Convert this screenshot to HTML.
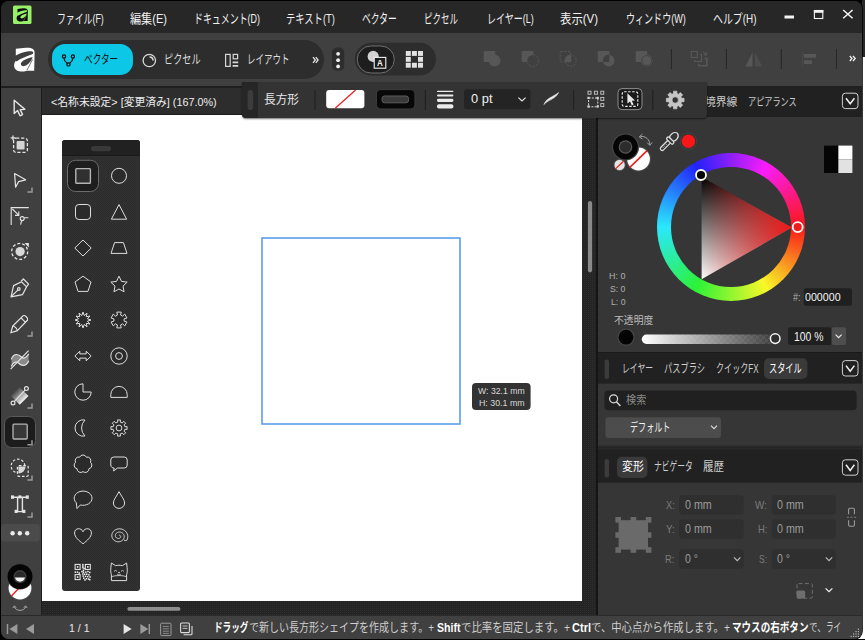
<!DOCTYPE html><html lang="ja"><head><meta charset="utf-8"><title>Affinity</title><style>

html,body{margin:0;padding:0;}
body{width:865px;height:640px;overflow:hidden;background:#000;position:relative;font-family:"Liberation Sans","Noto Sans CJK JP",sans-serif;}
.b{position:absolute;display:block;}
.t{position:absolute;white-space:pre;transform-origin:0 50%;display:block;}
#win{position:absolute;left:0;top:0;width:865px;height:640px;overflow:hidden;}

</style></head><body><div id="win">
<div class="b" style="left:862px;top:0px;width:3px;height:57px;background:#2a2a2a;"></div>
<div class="b" style="left:862.3px;top:57px;width:3px;height:581.6px;background:#ffffff;"></div>
<div class="b" style="left:850px;top:620px;width:15px;height:18.6px;background:#ffffff;"></div>
<div class="b" style="left:1px;top:1px;width:860.7px;height:637.6px;border-radius:8px;overflow:hidden;background:#2a2a2a;box-shadow:0 0 0 0.8px #000;">
<div class="b" style="left:-1px;top:-1px;width:865px;height:640px;">
<div class="b" style="left:0px;top:0px;width:865px;height:33px;background:#272727;"></div>
<div class="b" style="left:0px;top:33px;width:865px;height:53px;background:#404040;"></div>
<div class="b" style="left:0px;top:86px;width:865px;height:2px;background:#1f1f1f;"></div>
<div class="b" style="left:0px;top:88px;width:41px;height:527px;background:#404040;"></div>
<div class="b" style="left:41px;top:88px;width:1px;height:527px;background:#1c1c1c;"></div>
<div class="b" style="left:42px;top:88px;width:556px;height:27px;background:#2d2d2d;"></div>
<div class="b" style="left:42px;top:113.6px;width:556px;height:1.4px;background:#1c1c1c;"></div>
<div class="b" style="left:42px;top:115px;width:540px;height:486px;background:#ffffff;"></div>
<div class="b" style="left:598px;top:88px;width:264px;height:527px;background:#363636;"></div>
<div class="b" style="left:598px;top:86px;width:264px;height:30.6px;background:#212121;"></div>
<div class="b" style="left:596px;top:86px;width:2px;height:529px;background:#151515;"></div>
<div class="b" style="left:0px;top:615px;width:865px;height:1px;background:#2a2a2a;"></div>
<div class="b" style="left:0px;top:616px;width:865px;height:24px;background:#404040;"></div>
<span class="t" style="left:57px;top:8.5px;font-size:13px;line-height:20px;color:#f2f2f2;font-weight:400;transform:scaleX(0.6814)">ファイル(F)</span>
<span class="t" style="left:130px;top:8.5px;font-size:13px;line-height:20px;color:#f2f2f2;font-weight:400;transform:scaleX(0.8536)">編集(E)</span>
<span class="t" style="left:193.75px;top:8.5px;font-size:13px;line-height:20px;color:#f2f2f2;font-weight:400;transform:scaleX(0.6872)">ドキュメント(D)</span>
<span class="t" style="left:286px;top:8.5px;font-size:13px;line-height:20px;color:#f2f2f2;font-weight:400;transform:scaleX(0.7146)">テキスト(T)</span>
<span class="t" style="left:361.75px;top:8.5px;font-size:13px;line-height:20px;color:#f2f2f2;font-weight:400;transform:scaleX(0.6750)">ベクター</span>
<span class="t" style="left:424.25px;top:8.5px;font-size:13px;line-height:20px;color:#f2f2f2;font-weight:400;transform:scaleX(0.6536)">ピクセル</span>
<span class="t" style="left:486.5px;top:8.5px;font-size:13px;line-height:20px;color:#f2f2f2;font-weight:400;transform:scaleX(0.6926)">レイヤー(L)</span>
<span class="t" style="left:560.25px;top:8.5px;font-size:13px;line-height:20px;color:#f2f2f2;font-weight:400;transform:scaleX(0.8767)">表示(V)</span>
<span class="t" style="left:625.75px;top:8.5px;font-size:13px;line-height:20px;color:#f2f2f2;font-weight:400;transform:scaleX(0.6953)">ウィンドウ(W)</span>
<span class="t" style="left:712.5px;top:8.5px;font-size:13px;line-height:20px;color:#f2f2f2;font-weight:400;transform:scaleX(0.7625)">ヘルプ(H)</span>
<div class="b" style="left:48px;top:40px;width:276px;height:39px;background:#2d2d2d;border-radius:19.5px;"></div>
<div class="b" style="left:52px;top:44px;width:81px;height:31px;background:#0cc7e6;border-radius:13px;"></div>
<span class="t" style="left:83.75px;top:50.5px;font-size:12.5px;line-height:19px;color:#101010;font-weight:400;transform:scaleX(0.6917)">ベクター</span>
<span class="t" style="left:164px;top:50.5px;font-size:12.5px;line-height:19px;color:#dedede;font-weight:400;transform:scaleX(0.7318)">ピクセル</span>
<span class="t" style="left:247px;top:50.5px;font-size:12.5px;line-height:19px;color:#dedede;font-weight:400;transform:scaleX(0.6798)">レイアウト</span>
<span class="t" style="left:51px;top:93.8px;font-size:11px;line-height:16px;color:#ececec;font-weight:400;transform:scaleX(0.9821)">&lt;名称未設定&gt; [変更済み] (167.0%)</span>
<span class="t" style="left:704.6px;top:93.5px;font-size:11px;line-height:16px;color:#cccccc;font-weight:400;transform:scaleX(0.9818)">境界線</span>
<span class="t" style="left:747.8px;top:93.5px;font-size:11px;line-height:16px;color:#cccccc;font-weight:400;transform:scaleX(0.7388)">アピアランス</span>
<div class="b" style="left:242px;top:82px;width:465px;height:36px;background:#333333;border-radius:0 0 4px 4px;box-shadow:0 1px 2px rgba(0,0,0,.55);"></div>
<div class="b" style="left:242px;top:82px;width:16px;height:36px;background:#262626;border-radius:0 0 0 4px;"></div>
<span class="t" style="left:263.75px;top:90.5px;font-size:12px;line-height:18px;color:#e8e8e8;font-weight:400;transform:scaleX(0.9718)">長方形</span>
<span class="t" style="left:68.5px;top:619.5px;font-size:11px;line-height:16px;color:#e8e8e8;font-weight:400;transform:scaleX(0.9577)">1 / 1</span>
<span class="t" style="left:214px;top:618.5px;font-size:12px;line-height:18px;color:#ffffff;font-weight:700;transform:scaleX(0.7185)">ドラッグ</span>
<span class="t" style="left:249px;top:618.5px;font-size:12px;line-height:18px;color:#d0d0d0;font-weight:400;transform:scaleX(0.8340)">で新しい長方形シェイプを作成します。+</span>
<span class="t" style="left:437px;top:618.5px;font-size:12px;line-height:18px;color:#ffffff;font-weight:700;transform:scaleX(0.8811)">Shift</span>
<span class="t" style="left:461px;top:618.5px;font-size:12px;line-height:18px;color:#d0d0d0;font-weight:400;transform:scaleX(0.8664)">で比率を固定します。+</span>
<span class="t" style="left:571.5px;top:618.5px;font-size:12px;line-height:18px;color:#ffffff;font-weight:700;transform:scaleX(0.9191)">Ctrl</span>
<span class="t" style="left:591px;top:618.5px;font-size:12px;line-height:18px;color:#d0d0d0;font-weight:400;transform:scaleX(0.8615)">で、中心点から作成します。+</span>
<span class="t" style="left:731.5px;top:618.5px;font-size:12px;line-height:18px;color:#ffffff;font-weight:700;transform:scaleX(0.7967)">マウスの右ボタン</span>
<span class="t" style="left:809.4px;top:618.5px;font-size:12px;line-height:18px;color:#d0d0d0;font-weight:400;transform:scaleX(0.7139)">で、</span>
<span class="t" style="left:826.3px;top:618.5px;font-size:12px;line-height:18px;color:#d0d0d0;font-weight:400;transform:scaleX(0.6288)">ライ</span>
<div class="b" style="left:657.1px;top:153px;width:148.4px;height:148.4px;border-radius:50%;background:conic-gradient(from 90deg,#fb1818,#f8f828,#2cf238,#2ae8fc,#2222fa,#fa1cfa,#fb1818);"></div>
<div class="b" style="left:671.3px;top:167.2px;width:120px;height:120px;border-radius:50%;background:#363636;"></div>
<svg class="b" style="left:0;top:0" width="865" height="640" viewBox="0 0 865 640"><defs><pattern id="dith2" width="2" height="2" patternUnits="userSpaceOnUse"><rect width="2" height="2" fill="#242424"/><rect width="1" height="1" fill="#2e2e2e"/></pattern></defs><rect x="582" y="118" width="14" height="497" fill="url(#dith2)"/><rect x="42" y="601" width="541" height="14" fill="url(#dith2)"/><defs><linearGradient id="tv" x1="0" y1="0" x2="0" y2="1"><stop offset="0" stop-color="#000"/><stop offset="1" stop-color="#fff"/></linearGradient><linearGradient id="th" x1="0" y1="0" x2="1" y2="0"><stop offset="0" stop-color="#e81c1c" stop-opacity="0"/><stop offset="1" stop-color="#f01818" stop-opacity="1"/></linearGradient></defs><path d="M701.6,177 L791.6,227.6 L701.6,279.2 Z" fill="url(#tv)"/><path d="M701.6,177 L791.6,227.6 L701.6,279.2 Z" fill="url(#th)"/><circle cx="701" cy="175" r="5" fill="#050505" stroke="#ffffff" stroke-width="1.8"/><circle cx="797.7" cy="227.1" r="5" fill="#ee1c1c" stroke="#ffffff" stroke-width="1.8"/><circle cx="638.5" cy="159" r="12.4" fill="#4c4c4c"/><circle cx="638.5" cy="159" r="11.4" fill="#ffffff"/><path d="M629.6,167.6 L647,150.6" stroke="#f02020" stroke-width="1.6"/><circle cx="625.5" cy="147" r="13.6" fill="#484848"/><circle cx="625.5" cy="147" r="12.4" fill="#060606"/><circle cx="625.5" cy="147" r="6.8" fill="#5a5a5a"/><circle cx="625.5" cy="147" r="5.6" fill="#2c2c2c"/><circle cx="619.6" cy="165" r="5.6" fill="#e4e4e4" stroke="#4a4a4a" stroke-width="0.8"/><path d="M615.8,168.6 L623.4,161.2" stroke="#f02020" stroke-width="1.3"/><path d="M640.4,136.6 C645.6,135.8 649.8,139.6 649.8,144.6 M639.2,136.8 L642.4,134.2 M639.2,136.8 L642.4,139 M649.8,145.4 L647.2,142.6 M649.8,145.4 L652.2,142.4" fill="none" stroke="#a4a4a4" stroke-width="1"/><g transform="translate(660.9,149.9) rotate(-45)" fill="#363636" stroke="#e2e2e2" stroke-width="1.2" stroke-linejoin="round"><rect x="0" y="-1.9" width="13" height="3.8" rx="1.9"/><path d="M14.6,-2.2 C16,-4.4 22.6,-4.6 23.4,0 C22.6,4.6 16,4.4 14.6,2.2 Z"/><rect x="11.6" y="-4.4" width="3.2" height="8.8" rx="1.6"/><path d="M3,0 H8" stroke-width="0.8" stroke-dasharray="1 1"/></g><circle cx="688.4" cy="141.2" r="8.2" fill="#2f2f2f" stroke="#484848" stroke-width="0.8"/><circle cx="688.4" cy="141.2" r="6.8" fill="#f61818"/><rect x="824" y="145.6" width="14.4" height="27.4" fill="#050505"/><rect x="838.4" y="145.6" width="14" height="13.8" fill="#ffffff"/><rect x="838.4" y="159.4" width="14" height="13.6" fill="#e2e2e2"/><rect x="803.8" y="288.2" width="48.2" height="17.6" rx="2" fill="#202020"/><circle cx="626" cy="337.2" r="8.6" fill="#474747"/><circle cx="626" cy="337.2" r="7.4" fill="#040404"/><defs><pattern id="chk" width="6" height="6" patternUnits="userSpaceOnUse"><rect width="6" height="6" fill="#3b3b3b"/><rect width="3" height="3" fill="#464646"/><rect x="3" y="3" width="3" height="3" fill="#464646"/></pattern><linearGradient id="og" x1="0" y1="0" x2="1" y2="0"><stop offset="0" stop-color="#fff" stop-opacity="1"/><stop offset="1" stop-color="#fff" stop-opacity="0"/></linearGradient></defs><rect x="641.8" y="334.6" width="134" height="9.4" rx="4.7" fill="url(#chk)"/><rect x="641.8" y="334.6" width="134" height="9.4" rx="4.7" fill="url(#og)"/><circle cx="775.2" cy="338.6" r="4.8" fill="#2e2e2e" stroke="#f4f4f4" stroke-width="1.5"/><rect x="788.2" y="327.2" width="43.4" height="17.8" rx="2" fill="#202020"/><rect x="831.6" y="327.2" width="14.4" height="17.8" rx="2" fill="#4e4e4e"/><path d="M835.6,334.6 L838.6,337.6 L841.6,334.6" fill="none" stroke="#e8e8e8" stroke-width="1.2"/><rect x="598" y="352" width="264" height="1.4" fill="#1a1a1a"/><rect x="598" y="353.2" width="264" height="30.4" fill="#212121"/><rect x="604.6" y="359.4" width="4.4" height="19.6" rx="2.2" fill="#3c3c3c"/><rect x="764" y="358.2" width="43.4" height="20.8" rx="5" fill="#3a3a3a"/><rect x="604.4" y="390.6" width="252.2" height="19.6" rx="4" fill="#202020"/><circle cx="613.6" cy="398.8" r="4" fill="none" stroke="#dcdcdc" stroke-width="1.2"/><path d="M616.4,401.8 L620.4,406" stroke="#dcdcdc" stroke-width="1.4"/><rect x="605.4" y="417.2" width="115.6" height="20.8" rx="3" fill="#4c4c4c"/><path d="M711,425.6 L714,428.6 L717,425.6" fill="none" stroke="#e0e0e0" stroke-width="1.1"/><rect x="598" y="445.6" width="264" height="5" fill="url(#dith2)"/><rect x="598" y="450.4" width="264" height="1.2" fill="#1a1a1a"/><rect x="598" y="451.4" width="264" height="31.2" fill="#212121"/><rect x="604.6" y="458.8" width="4.4" height="18.8" rx="2.2" fill="#3c3c3c"/><rect x="617" y="456.8" width="30.4" height="21.2" rx="5" fill="#3a3a3a"/><rect x="618.6" y="520.2" width="29.4" height="29.4" fill="#6a6a6a"/><rect x="615.4" y="517" width="5.6" height="5.6" fill="#6a6a6a"/><rect x="615.4" y="532.2" width="5.6" height="5.6" fill="#6a6a6a"/><rect x="615.4" y="547.2" width="5.6" height="5.6" fill="#6a6a6a"/><rect x="630.6" y="517" width="5.6" height="5.6" fill="#6a6a6a"/><rect x="630.6" y="547.2" width="5.6" height="5.6" fill="#6a6a6a"/><rect x="645.8" y="517" width="5.6" height="5.6" fill="#6a6a6a"/><rect x="645.8" y="532.2" width="5.6" height="5.6" fill="#6a6a6a"/><rect x="645.8" y="547.2" width="5.6" height="5.6" fill="#6a6a6a"/><rect x="679.2" y="495.2" width="64.4" height="19.6" rx="3.5" fill="#2f2f2f"/><rect x="771.6" y="495.2" width="64.4" height="19.6" rx="3.5" fill="#2f2f2f"/><rect x="679.2" y="519.2" width="64.4" height="19.6" rx="3.5" fill="#2f2f2f"/><rect x="771.6" y="519.2" width="64.4" height="19.6" rx="3.5" fill="#2f2f2f"/><rect x="679.2" y="549.2" width="64.4" height="19.6" rx="3.5" fill="#2f2f2f"/><rect x="771.6" y="549.2" width="64.4" height="19.6" rx="3.5" fill="#2f2f2f"/><path d="M734.0,557.4 L737.2,560.6 L740.4000000000001,557.4" fill="none" stroke="#bcbcbc" stroke-width="1.2"/><path d="M825.8,557.4 L829,560.6 L832.2,557.4" fill="none" stroke="#bcbcbc" stroke-width="1.2"/><g fill="none" stroke="#9a9a9a" stroke-width="1.1"><path d="M848.6,514.2 V509.4 a1.2,1.2 0 0 1 1.2,-1.2 H853.2 a1.2,1.2 0 0 1 1.2,1.2 V514.2"/><path d="M848.6,520.2 V525 a1.2,1.2 0 0 0 1.2,1.2 H853.2 a1.2,1.2 0 0 0 1.2,-1.2 V520.2"/><path d="M846.8,517.2 H856.2" stroke-dasharray="2.2 1.4" stroke="#7a7a7a"/></g><rect x="797" y="583.6" width="15.4" height="14.6" rx="1.5" fill="none" stroke="#6e6e6e" stroke-width="1" stroke-dasharray="4 2.4"/><rect x="796.6" y="590.4" width="8.6" height="8.2" rx="1.6" fill="#6e6e6e"/><path d="M825.6,588.4 L829,591.6 L832.4,588.4" fill="none" stroke="#f0f0f0" stroke-width="1.3"/><g fill="#9a9a9a"><rect x="6.8" y="624" width="1.4" height="10"/><path d="M17.4,624 V634 L9.4,629 Z"/><path d="M34,624 V634 L26,629 Z"/></g><g fill="#e6e6e6"><path d="M123.6,624 V634 L131.6,629 Z"/></g><g fill="#9a9a9a"><path d="M140.4,624 V634 L148.2,629 Z"/><rect x="148.6" y="624" width="1.4" height="10"/></g><g fill="none" stroke="#9a9a9a" stroke-width="1"><rect x="160.6" y="623.2" width="10.4" height="12.4" rx="1"/><path d="M162.8,626.4 H168.8 M162.8,628.8 H168.8 M162.8,631.2 H168.8 M162.8,633.4 H168.8" stroke-width="0.8"/></g><g fill="none" stroke="#dcdcdc" stroke-width="1.1"><rect x="180.6" y="623" width="8.8" height="9.6" rx="1"/><path d="M183.6,634.8 H191 a1,1 0 0 0 1,-1 V626"/><path d="M182.6,626 H187.4 M182.6,628.4 H187.4" stroke-width="0.8"/></g><rect x="850.6" y="635.8" width="1.2" height="1.2" fill="#b0b0b0"/><rect x="853.0" y="633.4" width="1.2" height="1.2" fill="#b0b0b0"/><rect x="853.0" y="635.8" width="1.2" height="1.2" fill="#b0b0b0"/><rect x="855.4" y="631.0" width="1.2" height="1.2" fill="#b0b0b0"/><rect x="855.4" y="633.4" width="1.2" height="1.2" fill="#b0b0b0"/><rect x="855.4" y="635.8" width="1.2" height="1.2" fill="#b0b0b0"/><rect x="857.8" y="628.6" width="1.2" height="1.2" fill="#b0b0b0"/><rect x="857.8" y="631.0" width="1.2" height="1.2" fill="#b0b0b0"/><rect x="857.8" y="633.4" width="1.2" height="1.2" fill="#b0b0b0"/><rect x="857.8" y="635.8" width="1.2" height="1.2" fill="#b0b0b0"/><rect x="13" y="5.5" width="18.5" height="18.5" rx="1.5" fill="#98ef69"/><g transform="translate(13.2,4.1) scale(0.55)"><path fill="#0a0a0a" d="M7.8,8.8 L18,7.7 C23.5,7.3 26.9,9 26.6,13 L26.2,30.8 L19.5,30.8 C17,31.6 12,32 9,30.5 C5.3,28.5 5.3,23.5 8,20.5 C9.5,18.5 8.6,17.5 7.8,16 Z"/><path fill="#98ef69" d="M7.2,15.8 C12,13 20.5,10.6 24.3,11.4 C25.9,12 25.5,13.4 24.1,14.3 C19,16.4 12.5,18.4 8.6,21.4 L6.6,19.4 Z"/><path fill="#98ef69" d="M24.7,17.1 C20,18.1 14,20.5 12.9,23.6 C12.6,26.6 16.4,26.6 18.5,25.3 C21.5,23.3 23.9,20 24.7,17.1 Z"/><path stroke="#98ef69" stroke-width="0.7" fill="none" d="M24.6,19.4 L18.8,30.4"/></g><rect x="784.5" y="15.5" width="9.5" height="3" fill="#f4f4f4"/><rect x="814.4" y="10.5" width="8.4" height="8" fill="none" stroke="#f4f4f4" stroke-width="1.1"/><rect x="813.9" y="10" width="9.4" height="2.8" fill="#f4f4f4"/><path d="M843.2,10 L852.6,18.2 M852.6,10 L843.2,18.2" stroke="#f4f4f4" stroke-width="1.5" fill="none"/><g transform="translate(8,40) scale(1.0)"><path fill="#ffffff" d="M7.8,8.8 L18,7.7 C23.5,7.3 26.9,9 26.6,13 L26.2,30.8 L19.5,30.8 C17,31.6 12,32 9,30.5 C5.3,28.5 5.3,23.5 8,20.5 C9.5,18.5 8.6,17.5 7.8,16 Z"/><path fill="#404040" d="M7.2,15.8 C12,13 20.5,10.6 24.3,11.4 C25.9,12 25.5,13.4 24.1,14.3 C19,16.4 12.5,18.4 8.6,21.4 L6.6,19.4 Z"/><path fill="#404040" d="M24.7,17.1 C20,18.1 14,20.5 12.9,23.6 C12.6,26.6 16.4,26.6 18.5,25.3 C21.5,23.3 23.9,20 24.7,17.1 Z"/><path stroke="#404040" stroke-width="0.7" fill="none" d="M24.6,19.4 L18.8,30.4"/></g><g fill="none" stroke="#0a0a0a" stroke-width="1.2"><path d="M64,58.2 C64.2,61.2 66,62.4 67.2,63.2 M72.9,58.2 C72.7,61.2 70.9,62.4 69.7,63.2"/><circle cx="64" cy="56.5" r="1.6"/><circle cx="72.9" cy="56.5" r="1.6"/><circle cx="68.45" cy="64.4" r="1.6"/></g><g fill="none" stroke="#d8d8d8" stroke-width="1.3"><circle cx="149.3" cy="60.5" r="6.2"/><path d="M149.5,57 C151.8,57 153,58.6 153,60.6" stroke-width="1.6"/></g><g fill="none" stroke="#d8d8d8" stroke-width="1.2"><rect x="225.6" y="54.4" width="4.6" height="12"/><rect x="233.2" y="54.4" width="4.4" height="4.4"/><path d="M232.6,62.4 H238.2 M232.6,65.8 H238.2" stroke-width="1.7"/></g><path d="M313,57.2 L315.3,60 L313,62.8 M315.8,57.2 L318.1,60 L315.8,62.8" fill="none" stroke="#ececec" stroke-width="1.25"/><rect x="332" y="47.6" width="12.2" height="23.2" rx="5" fill="#2d2d2d"/><circle cx="338.1" cy="53.8" r="1.9" fill="#f0f0f0"/><circle cx="338.1" cy="60.2" r="1.9" fill="#f0f0f0"/><circle cx="338.1" cy="66.4" r="1.9" fill="#f0f0f0"/><rect x="354.8" y="42.8" width="81.2" height="32.8" rx="16.4" fill="#2d2d2d"/><rect x="357.3" y="46" width="37" height="27" rx="13.5" fill="#1d1d1d" stroke="#707070" stroke-width="1"/><circle cx="373.2" cy="56.4" r="5.6" fill="#d2d2d2"/><rect x="374.2" y="57.4" width="11.6" height="10.8" fill="#1d1d1d" stroke="#f0f0f0" stroke-width="1.1"/><rect x="405.8" y="51.0" width="5" height="4.9" fill="#e2e2e2"/><rect x="405.8" y="56.9" width="5" height="4.9" fill="#e2e2e2"/><rect x="405.8" y="62.8" width="5" height="4.9" fill="#e2e2e2"/><rect x="411.9" y="51.0" width="5" height="4.9" fill="#e2e2e2"/><rect x="411.9" y="62.8" width="5" height="4.9" fill="#e2e2e2"/><rect x="418.0" y="51.0" width="5" height="4.9" fill="#e2e2e2"/><rect x="418.0" y="56.9" width="5" height="4.9" fill="#e2e2e2"/><rect x="418.0" y="62.8" width="5" height="4.9" fill="#e2e2e2"/><rect x="483.7" y="51" width="11.6" height="11" rx="1.2" fill="#575757"/><circle cx="494.7" cy="60.6" r="5.8" fill="#575757"/><rect x="521.7" y="51" width="11.6" height="11" rx="1.2" fill="#575757"/><circle cx="532.7" cy="60.6" r="5.8" fill="#404040" stroke="#575757" stroke-width="1" stroke-dasharray="2 1.4"/><rect x="560.2" y="51.5" width="10.6" height="10.4" rx="1" fill="none" stroke="#575757" stroke-width="1" stroke-dasharray="2 1.4"/><circle cx="570.7" cy="60.6" r="5.5" fill="none" stroke="#575757" stroke-width="1" stroke-dasharray="2 1.4"/><path d="M564.9000000000001,62 A5.8,5.8 0 0 1 570.7,54.8 L571.1,62 Z" fill="#575757"/><rect x="597.7" y="51" width="11.6" height="11" rx="1.2" fill="#575757"/><circle cx="608.7" cy="60.6" r="5.8" fill="#575757"/><path d="M602.9000000000001,62 A5.8,5.8 0 0 1 608.7,54.8 L609.3000000000001,55 L609.3000000000001,62 Z" fill="#404040"/><rect x="635.7" y="51" width="11.6" height="11" rx="1.2" fill="#575757"/><circle cx="646.7" cy="60.6" r="5.8" fill="#575757"/><circle cx="646.7" cy="60.6" r="5" fill="none" stroke="#404040" stroke-width="0.9"/><path d="M639.2,58 V54 H646.9000000000001 V62.2" fill="none" stroke="#404040" stroke-width="0.01"/><rect x="670.9" y="49" width="1" height="20" fill="#262626"/><rect x="725.9" y="49" width="1" height="20" fill="#262626"/><rect x="780.8" y="49" width="1" height="20" fill="#262626"/><rect x="836.0" y="49" width="1" height="20" fill="#262626"/><g fill="none" stroke="#575757" stroke-width="1.1"><rect x="691.3" y="51.5" width="6" height="6"/><path d="M694.8,60 V61.5 H701.5 V54.5 H700"/><path d="M699,64 V65.8 H706.8 V58.5 H704.5" stroke-width="1.6"/><path d="M703,51.6 L706.6,55 M706.6,52.2 V55 H703.8"/></g><path d="M745.6,66.5 L752.5,52.5 V66.5 Z" fill="#575757"/><path d="M755,52.5 L762.2,66.5 H755 Z" fill="#575757" opacity="0.55"/><rect x="802" y="52" width="0.8" height="14" fill="#4a4a4a"/><rect x="803.8" y="54" width="12.4" height="3.8" rx="0.8" fill="#575757"/><rect x="803.8" y="60.2" width="8.2" height="3.8" rx="0.8" fill="#575757"/><path d="M849.8,56 L852,58.5 L849.8,61 M853,56 L855.2,58.5 L853,61" fill="none" stroke="#f4f4f4" stroke-width="1.25"/><path d="M14.2,100.3 V113.6 L17.6,110.6 L20,115.8 L22.6,114.6 L20.2,109.6 L24.9,109.4 Z" fill="none" stroke="#e4e4e4" stroke-width="1.4" stroke-linejoin="round"/><rect x="13.6" y="138.2" width="13.8" height="14.2" rx="2.5" fill="none" stroke="#e4e4e4" stroke-width="1.3" stroke-dasharray="3.2 1.8"/><rect x="16.6" y="141" width="8" height="8.6" rx="1" fill="#d4d4d4"/><path d="M10.6,137.8 H15.4 M13,135.4 V140.2" stroke="#e4e4e4" stroke-width="1.3" fill="none"/><path d="M14.6,173.6 L25.6,179.8 L18.6,181.6 L15.6,187.2 Z" fill="none" stroke="#e4e4e4" stroke-width="1.2" stroke-linejoin="round"/><path d="M27.4,192.0 H32.0 V187.4" fill="none" stroke="#9a9a9a" stroke-width="1.5"/><g fill="none" stroke="#e4e4e4" stroke-width="1.1"><path d="M10.6,207.6 H28.8 M11.2,207 V225"/><path d="M12.4,209 L18.6,215.2 M18.8,211.6 V215.4 H15"/><circle cx="22.2" cy="218.6" r="2"/><path d="M21.6,220.6 L20.6,224.6 M24.2,217.8 H28.4"/></g><circle cx="19.7" cy="251.4" r="8" fill="none" stroke="#e4e4e4" stroke-width="1.3" stroke-dasharray="3 2"/><circle cx="20.1" cy="251.6" r="4.6" fill="#d8d8d8"/><path d="M24.6,243 H28.8 V247.6 Z" fill="#e4e4e4"/><g fill="none" stroke="#e4e4e4" stroke-width="1.2" stroke-linejoin="round"><path d="M11,296.8 L13.6,285.6 L21.6,281.8 L26.6,286.8 L22.6,294.6 Z"/><path d="M11.4,296.4 L18,289.8"/><circle cx="18.8" cy="289" r="1.3"/><path d="M21,281.4 L23.4,279 L28.6,284.2 L26.4,286.8"/></g><g fill="none" stroke="#e4e4e4" stroke-width="1.2" stroke-linejoin="round"><path d="M10.8,332.8 L12.8,326 L23,315.8 C24.6,314.6 28.6,318 27.6,320 L17.4,330.6 Z"/><path d="M12.8,326 C14.6,326.4 16.8,328.4 17.4,330.6 M21,317.8 L25.6,322.4"/></g><path d="M27.4,336.0 H32.0 V331.4" fill="none" stroke="#9a9a9a" stroke-width="1.5"/><path d="M11.6,359 C14,352 19,354.5 21.5,357 C24,359.5 26.5,357 28.6,354.5 L28.6,361.5 C26,368 21.5,366 19,363.5 C16.5,361 14,362.5 11.6,366 Z" fill="#8a8a8a"/><g fill="none" stroke="#e4e4e4" stroke-width="1.2"><path d="M11.2,359.4 C14,352 19,354.5 21.5,357 C24,359.5 26.5,357 28.8,353.8"/><path d="M11.2,366.4 C14,361.5 16.5,361 19,363.5 C21.5,366 26,367 28.8,360.8"/><path d="M10.6,369.2 L28.6,350.6"/></g><defs><linearGradient id="gt" x1="0" y1="0" x2="0" y2="1"><stop offset="0" stop-color="#e8e8e8" stop-opacity="0.05"/><stop offset="1" stop-color="#f2f2f2"/></linearGradient></defs><g transform="rotate(-45 19.6 395.8)"><rect x="13.4" y="389.4" width="12.4" height="12.8" fill="url(#gt)"/></g><g fill="#404040" stroke="#e4e4e4" stroke-width="1.2"><path d="M13.6,402.4 L26,389.2"/><circle cx="13" cy="403" r="1.9"/><circle cx="26.4" cy="388.6" r="1.9"/></g><path d="M27.4,408.0 H32.0 V403.4" fill="none" stroke="#9a9a9a" stroke-width="1.5"/><rect x="4.5" y="416.5" width="31" height="31" rx="7" fill="#1c1c1c" stroke="#5a5a5a" stroke-width="1"/><rect x="13" y="424.2" width="14.2" height="14.8" rx="1" fill="#383838" stroke="#b4b4b4" stroke-width="1.3"/><path d="M27.4,444.8 H32.0 V440.2" fill="none" stroke="#9a9a9a" stroke-width="1.5"/><circle cx="18" cy="466" r="6.8" fill="none" stroke="#e4e4e4" stroke-width="1.2" stroke-dasharray="2.6 1.8"/><rect x="17.4" y="465.6" width="10.8" height="10.8" rx="1.5" fill="#404040" stroke="#e4e4e4" stroke-width="1.2" stroke-dasharray="2.6 1.8"/><path d="M18.4,466.6 H25.6 A7.2,7.2 0 0 1 18.4,473.6 Z" fill="#d8d8d8"/><path d="M27.4,480.0 H32.0 V475.4" fill="none" stroke="#9a9a9a" stroke-width="1.5"/><g fill="none" stroke="#e4e4e4" stroke-width="1.4"><path d="M12.4,497.2 H27.4 M17.6,497.2 V511.4 M22.4,497.2 V511.4 M16,511.6 H24"/></g><g fill="#e4e4e4"><rect x="11" y="495.4" width="3" height="3.4"/><rect x="25.8" y="495.4" width="3" height="3.4"/><rect x="18.4" y="495.4" width="3" height="3"/><rect x="14.6" y="509.8" width="3" height="3.2"/><rect x="22.4" y="509.8" width="3" height="3.2"/></g><path d="M27.4,517.0 H32.0 V512.4" fill="none" stroke="#9a9a9a" stroke-width="1.5"/><rect x="1" y="524" width="38.8" height="17.6" rx="3" fill="#4b4b4b"/><circle cx="12.6" cy="533.2" r="2.2" fill="#ececec"/><circle cx="19.8" cy="533.2" r="2.2" fill="#ececec"/><circle cx="27.2" cy="533.2" r="2.2" fill="#ececec"/><circle cx="20" cy="588" r="12.3" fill="#4a4a4a"/><circle cx="20" cy="588" r="11.4" fill="#ffffff"/><path d="M11.4,596 L20,587" stroke="#ff1a1a" stroke-width="1.4"/><circle cx="20" cy="576.6" r="13" fill="#3a3a3a"/><circle cx="20" cy="576.6" r="12.4" fill="#050505"/><circle cx="20" cy="576.6" r="6.6" fill="#3c3c3c"/><circle cx="20" cy="576.6" r="5.2" fill="#2a2a2a"/><path d="M15,577.6 A5.1,5.1 0 0 0 25,577.6 Z" fill="#f4f4f4"/><path d="M14.4,606.6 C15.6,611.6 24.4,611.6 25.6,606.6 M12.8,608 L14.4,605.8 L16.2,607.8 M23.8,607.8 L25.6,605.8 L27.2,608" fill="none" stroke="#a8a8a8" stroke-width="1"/><defs><pattern id="dith" width="2" height="2" patternUnits="userSpaceOnUse"><rect width="2" height="2" fill="#323232"/><rect width="1" height="1" fill="#2c2c2c"/><rect x="1" y="1" width="1" height="1" fill="#2c2c2c"/></pattern></defs><rect x="62" y="140" width="78" height="451" rx="3" fill="url(#dith)"/><path d="M62,156 V143 a3,3 0 0 1 3,-3 H137 a3,3 0 0 1 3,3 V156 Z" fill="#212121"/><rect x="62" y="155" width="78" height="1" fill="#1a1a1a"/><rect x="91" y="146" width="20" height="5.2" rx="2.6" fill="#393939"/><rect x="67.5" y="160.3" width="31" height="31.2" rx="8" fill="#1e1e1e" stroke="#6c6c6c" stroke-width="1"/><rect x="75.8" y="168.6" width="14.6" height="14.6" rx="0.8" fill="#303030" stroke="#b4b4b4" stroke-width="1.4"/><circle cx="119" cy="175.8" r="7.5" fill="#2b2b2b" stroke="#dedede" stroke-width="1.0" stroke-linejoin="round"/><rect x="75.5" y="204.5" width="15" height="15" rx="3.4" fill="#2b2b2b" stroke="#dedede" stroke-width="1.0" stroke-linejoin="round"/><path d="M119.00,204.60 L126.60,219.20 L111.40,219.20 Z" fill="#2b2b2b" stroke="#dedede" stroke-width="1.0" stroke-linejoin="round" /><path d="M83.00,240.00 L91.20,248.00 L83.00,256.00 L74.80,248.00 Z" fill="#2b2b2b" stroke="#dedede" stroke-width="1.0" stroke-linejoin="round" /><path d="M114.60,242.60 L123.40,242.60 L127.00,253.40 L111.00,253.40 Z" fill="#2b2b2b" stroke="#dedede" stroke-width="1.0" stroke-linejoin="round" /><path d="M83.00,276.20 L90.99,282.00 L87.94,291.40 L78.06,291.40 L75.01,282.00 Z" fill="#2b2b2b" stroke="#dedede" stroke-width="1.0" stroke-linejoin="round" /><path d="M119.00,276.20 L121.47,281.40 L127.18,282.14 L122.99,286.10 L124.05,291.76 L119.00,289.00 L113.95,291.76 L115.01,286.10 L110.82,282.14 L116.53,281.40 Z" fill="#2b2b2b" stroke="#dedede" stroke-width="1.0" stroke-linejoin="round" /><path d="M83.00,312.00 L84.19,315.56 L87.00,313.07 L86.25,316.75 L89.93,316.00 L87.44,318.81 L91.00,320.00 L87.44,321.19 L89.93,324.00 L86.25,323.25 L87.00,326.93 L84.19,324.44 L83.00,328.00 L81.81,324.44 L79.00,326.93 L79.75,323.25 L76.07,324.00 L78.56,321.19 L75.00,320.00 L78.56,318.81 L76.07,316.00 L79.75,316.75 L79.00,313.07 L81.81,315.56 Z" fill="#2b2b2b" stroke="#dedede" stroke-width="1.0" stroke-linejoin="round" stroke-width="0.9"/><path d="M116.79,312.10 L121.21,312.10 L120.57,315.04 L122.51,316.16 L124.74,314.14 L126.94,317.96 L124.08,318.88 L124.08,321.12 L126.94,322.04 L124.74,325.86 L122.51,323.84 L120.57,324.96 L121.21,327.90 L116.79,327.90 L117.43,324.96 L115.49,323.84 L113.26,325.86 L111.06,322.04 L113.92,321.12 L113.92,318.88 L111.06,317.96 L113.26,314.14 L115.49,316.16 L117.43,315.04 Z" fill="#2b2b2b" stroke="#dedede" stroke-width="1.0" stroke-linejoin="round" stroke-linejoin="round" stroke-width="1.1"/><path d="M74.90,356.00 L79.80,351.20 L79.80,353.90 L86.20,353.90 L86.20,351.20 L91.10,356.00 L86.20,360.80 L86.20,358.10 L79.80,358.10 L79.80,360.80 Z" fill="#2b2b2b" stroke="#dedede" stroke-width="1.0" stroke-linejoin="round" /><circle cx="119" cy="356" r="8.2" fill="#2b2b2b" stroke="#dedede" stroke-width="1.0" stroke-linejoin="round"/><circle cx="119" cy="356" r="3.4" fill="#2b2b2b" stroke="#dedede" stroke-width="1.0" stroke-linejoin="round"/><path d="M83,392 V383.8 A8.2,8.2 0 1 0 91.2,392 Z" fill="#2b2b2b" stroke="#dedede" stroke-width="1.0" stroke-linejoin="round" /><path d="M110.8,397.4 V394.6 A8.2,8.2 0 0 1 127.2,394.6 V397.4 Z" fill="#2b2b2b" stroke="#dedede" stroke-width="1.0" stroke-linejoin="round" /><path d="M85,420 A8.2,8.2 0 1 0 85,436 A11,11 0 0 1 85,420 Z" fill="#2b2b2b" stroke="#dedede" stroke-width="1.0" stroke-linejoin="round" /><path d="M117.56,419.93 L120.44,419.93 L120.26,422.13 L122.26,422.96 L123.69,421.27 L125.73,423.31 L124.04,424.74 L124.87,426.74 L127.07,426.56 L127.07,429.44 L124.87,429.26 L124.04,431.26 L125.73,432.69 L123.69,434.73 L122.26,433.04 L120.26,433.87 L120.44,436.07 L117.56,436.07 L117.74,433.87 L115.74,433.04 L114.31,434.73 L112.27,432.69 L113.96,431.26 L113.13,429.26 L110.93,429.44 L110.93,426.56 L113.13,426.74 L113.96,424.74 L112.27,423.31 L114.31,421.27 L115.74,422.96 L117.74,422.13 Z" fill="#2b2b2b" stroke="#dedede" stroke-width="1.0" stroke-linejoin="round"/><circle cx="119" cy="428" r="2.9" fill="#2b2b2b" stroke="#dedede" stroke-width="1.0" stroke-linejoin="round"/><path d="M79.70,457.15 A3.6,3.6 0 0 1 86.30,457.15 A3.6,3.6 0 0 1 90.41,462.31 A3.6,3.6 0 0 1 88.94,468.74 A3.6,3.6 0 0 1 83.00,471.60 A3.6,3.6 0 0 1 77.06,468.74 A3.6,3.6 0 0 1 75.59,462.31 A3.6,3.6 0 0 1 79.70,457.15 Z" fill="#2b2b2b" stroke="#dedede" stroke-width="1.0" stroke-linejoin="round" /><path d="M113.8,457 H124.2 a3,3 0 0 1 3,3 V465 a3,3 0 0 1 -3,3 H117.4 L113.6,471 L114.2,468 a3,3 0 0 1 -3.4,-3 V460 a3,3 0 0 1 3,-3 Z" fill="#2b2b2b" stroke="#dedede" stroke-width="1.0" stroke-linejoin="round" /><path d="M76.28,502.76 L77,508.6 L80.35,504.95 A8.9,7.1 0 1 0 76.28,502.76 Z" fill="#2b2b2b" stroke="#dedede" stroke-width="1.0" stroke-linejoin="round" /><path d="M119,491.6 C121.4,496.4 124.6,499.6 124.6,503 A5.6,5.4 0 0 1 113.4,503 C113.4,499.6 116.6,496.4 119,491.6 Z" fill="#2b2b2b" stroke="#dedede" stroke-width="1.0" stroke-linejoin="round" /><path d="M83,543.8 C79,540.6 74.6,537.2 74.6,533 C74.6,527.6 81.4,527.4 83,531.8 C84.6,527.4 91.4,527.6 91.4,533 C91.4,537.2 87,540.6 83,543.8 Z" fill="#2b2b2b" stroke="#dedede" stroke-width="1.0" stroke-linejoin="round" /><path d="M118.93,535.34 L119.02,535.29 L119.13,535.26 L119.24,535.23 L119.36,535.22 L119.49,535.22 L119.62,535.24 L119.75,535.28 L119.89,535.32 L120.02,535.39 L120.14,535.47 L120.26,535.57 L120.37,535.69 L120.47,535.82 L120.55,535.96 L120.61,536.12 L120.66,536.29 L120.69,536.46 L120.69,536.65 L120.67,536.83 L120.63,537.02 L120.57,537.21 L120.47,537.40 L120.36,537.58 L120.22,537.75 L120.05,537.92 L119.87,538.06 L119.66,538.20 L119.43,538.31 L119.19,538.40 L118.93,538.47 L118.65,538.51 L118.37,538.53 L118.08,538.52 L117.79,538.48 L117.50,538.41 L117.21,538.31 L116.94,538.18 L116.67,538.02 L116.42,537.83 L116.19,537.61 L115.98,537.37 L115.79,537.11 L115.64,536.83 L115.52,536.52 L115.43,536.20 L115.38,535.87 L115.36,535.53 L115.39,535.19 L115.46,534.84 L115.57,534.50 L115.72,534.17 L115.91,533.84 L116.13,533.53 L116.40,533.24 L116.71,532.98 L117.04,532.74 L117.41,532.54 L117.81,532.36 L118.22,532.23 L118.66,532.13 L119.11,532.07 L119.58,532.06 L120.04,532.10 L120.51,532.17 L120.97,532.30 L121.42,532.47 L121.85,532.68 L122.26,532.94 L122.64,533.24 L123.00,533.58 L123.31,533.95 L123.58,534.36 L123.81,534.79 L123.99,535.25 L124.12,535.73 L124.19,536.23 L124.21,536.73 L124.16,537.24 L124.06,537.75 L123.90,538.25 L123.68,538.73 L123.41,539.20 L123.08,539.65 L122.70,540.06 L122.26,540.44 L121.78,540.78 L121.26,541.08 L120.71,541.32 L120.12,541.52 L119.51,541.66 L118.88,541.74 L118.24,541.76 L117.59,541.72 L116.94,541.62 L116.31,541.45 L115.69,541.23 L115.09,540.94 L114.53,540.60 L114.00,540.20 L113.52,539.75 L113.09,539.25 L112.71,538.71 L112.39,538.13 L112.14,537.52 L111.96,536.88 L111.85,536.22 L111.81,535.55 L111.86,534.88 L111.97,534.21 L112.17,533.54 L112.44,532.90 L112.79,532.28 L113.21,531.69 L113.70,531.14 L114.25,530.63 L114.86,530.18 L115.52,529.78 L116.23,529.45 L116.98,529.18 L117.77,528.98 L118.57,528.86 L119.39,528.81 L120.22,528.85 L121.05,528.96 L121.87,529.15 L122.66,529.42 L123.43,529.76 L124.15,530.18 L124.84,530.67 L125.46,531.22 L126.03,531.84 L126.52,532.50 L126.94,533.22 L127.28,533.98 L127.53,534.77 L127.70,535.59 L127.77,536.42 L127.74,537.26 L127.62,538.10 L127.40,538.93 Q127.00,541.53 124.00,540.13" fill="none" stroke="#dedede" stroke-width="1.0"/><rect x="75.1" y="564.4" width="5" height="5" fill="#2b2b2b" stroke="#f0f0f0" stroke-width="1"/><rect x="76.8" y="566.1" width="1.6" height="1.6" fill="#f0f0f0"/><rect x="85.3" y="564.4" width="5" height="5" fill="#2b2b2b" stroke="#f0f0f0" stroke-width="1"/><rect x="87.0" y="566.1" width="1.6" height="1.6" fill="#f0f0f0"/><rect x="75.1" y="574.6" width="5" height="5" fill="#2b2b2b" stroke="#f0f0f0" stroke-width="1"/><rect x="76.8" y="576.3000000000001" width="1.6" height="1.6" fill="#f0f0f0"/><rect x="82.10" y="563.90" width="1.5" height="1.5" fill="#f0f0f0"/><rect x="82.10" y="565.40" width="1.5" height="1.5" fill="#f0f0f0"/><rect x="82.10" y="566.90" width="1.5" height="1.5" fill="#f0f0f0"/><rect x="83.30" y="567.80" width="1.5" height="1.5" fill="#f0f0f0"/><rect x="74.60" y="571.40" width="1.5" height="1.5" fill="#f0f0f0"/><rect x="76.70" y="571.40" width="1.5" height="1.5" fill="#f0f0f0"/><rect x="78.50" y="572.30" width="1.5" height="1.5" fill="#f0f0f0"/><rect x="81.20" y="570.80" width="1.5" height="1.5" fill="#f0f0f0"/><rect x="82.70" y="569.60" width="1.5" height="1.5" fill="#f0f0f0"/><rect x="82.70" y="571.40" width="1.5" height="1.5" fill="#f0f0f0"/><rect x="85.10" y="571.40" width="1.5" height="1.5" fill="#f0f0f0"/><rect x="87.20" y="570.80" width="1.5" height="1.5" fill="#f0f0f0"/><rect x="89.00" y="571.70" width="1.5" height="1.5" fill="#f0f0f0"/><rect x="83.90" y="573.50" width="1.5" height="1.5" fill="#f0f0f0"/><rect x="86.00" y="573.50" width="1.5" height="1.5" fill="#f0f0f0"/><rect x="88.10" y="574.10" width="1.5" height="1.5" fill="#f0f0f0"/><rect x="82.40" y="575.30" width="1.5" height="1.5" fill="#f0f0f0"/><rect x="84.80" y="575.60" width="1.5" height="1.5" fill="#f0f0f0"/><rect x="86.90" y="575.90" width="1.5" height="1.5" fill="#f0f0f0"/><rect x="89.30" y="576.20" width="1.5" height="1.5" fill="#f0f0f0"/><rect x="83.00" y="577.40" width="1.5" height="1.5" fill="#f0f0f0"/><rect x="85.70" y="578.00" width="1.5" height="1.5" fill="#f0f0f0"/><rect x="87.80" y="578.30" width="1.5" height="1.5" fill="#f0f0f0"/><rect x="84.20" y="579.20" width="1.5" height="1.5" fill="#f0f0f0"/><rect x="89.00" y="578.90" width="1.5" height="1.5" fill="#f0f0f0"/><rect x="82.10" y="573.20" width="1.5" height="1.5" fill="#f0f0f0"/><path d="M111.4,580.6 V574.8 C110.7,573 110.6,570 110.9,567.4 L111.4,563 L115.6,565.7 C117.8,565.1 120.2,565.1 122.4,565.7 L126.6,563 L127.1,567.4 C127.4,570 127.3,573 126.6,574.8 V580.6 Z" fill="#2b2b2b" stroke="#dedede" stroke-width="1.0" stroke-linejoin="round" fill="#3a3a3a" stroke-width="0.9"/><g fill="none" stroke="#dedede" stroke-width="0.8"><path d="M114,571.4 l1.5,-1 l1.5,1 M121,571.4 l1.5,-1 l1.5,1 M117.2,574.2 q1.8,1.8 3.6,0 M111.6,576.6 C115,575.2 123,575.2 126.4,576.6"/></g><circle cx="119" cy="572.6" r="0.8" fill="#e8e8e8"/><rect x="262" y="238" width="198" height="186" fill="none" stroke="#5b9eea" stroke-width="1.6"/><rect x="472" y="383" width="58.6" height="27" rx="4" fill="#333333"/><rect x="587.9" y="201" width="4.2" height="71.4" rx="2.1" fill="#8a8a8a"/><rect x="127.4" y="607" width="53" height="3.8" rx="1.9" fill="#8e8e8e"/><rect x="247.6" y="90" width="5.6" height="20" rx="2.8" fill="#3c3c3c"/><rect x="314.5" y="90" width="1" height="20" fill="#1e1e1e"/><rect x="424.9" y="90" width="1" height="20" fill="#1e1e1e"/><rect x="573.1" y="90" width="1" height="20" fill="#1e1e1e"/><rect x="652.3" y="90" width="1" height="20" fill="#1e1e1e"/><rect x="326.2" y="90" width="38.2" height="18.2" rx="3" fill="#ffffff"/><path d="M335.2,108.2 L355.6,90" stroke="#ee2222" stroke-width="1.3"/><rect x="376.4" y="89.6" width="38.6" height="19.4" rx="4.5" fill="#080808" stroke="#3e3e3e" stroke-width="1"/><rect x="382" y="96" width="26.6" height="6.8" rx="2.6" fill="#3a3a3a" stroke="#5c5c5c" stroke-width="1"/><g fill="#ebebeb"><rect x="437" y="90.8" width="16.4" height="1.2" rx="0.6"/><rect x="437" y="94.4" width="16.4" height="2.2" rx="1"/><rect x="437" y="98.8" width="16.4" height="3.2" rx="1.4"/><rect x="437" y="104.2" width="16.4" height="4.4" rx="1.8"/></g><rect x="464" y="89.2" width="66.4" height="20" rx="3" fill="#242424"/><path d="M518.4,97.6 L522,101 L525.6,97.6" fill="none" stroke="#e4e4e4" stroke-width="1.2"/><path d="M543.8,104.6 C547,97.5 552,97.8 558.6,92.6 C555.5,99.2 548,99.8 543.8,104.6 Z" fill="#e6e6e6" stroke="#e6e6e6" stroke-width="0.6" stroke-linejoin="round"/><rect x="588" y="91.2" width="3" height="3" fill="none" stroke="#c8c8c8" stroke-width="0.9"/><rect x="594.4" y="91.2" width="3" height="3" fill="none" stroke="#c8c8c8" stroke-width="0.9"/><rect x="600.8" y="91.2" width="3" height="3" fill="none" stroke="#c8c8c8" stroke-width="0.9"/><rect x="600.8" y="97.4" width="3" height="3" fill="none" stroke="#c8c8c8" stroke-width="0.9"/><rect x="600.8" y="103.6" width="3" height="3" fill="none" stroke="#c8c8c8" stroke-width="0.9"/><rect x="588.6" y="98" width="9.2" height="8.8" fill="none" stroke="#d8d8d8" stroke-width="1" stroke-dasharray="2 1.2"/><rect x="587.4" y="96.8" width="2.2" height="2.2" fill="#d8d8d8"/><rect x="596.6" y="96.8" width="2.2" height="2.2" fill="#d8d8d8"/><rect x="587.4" y="105.4" width="2.2" height="2.2" fill="#d8d8d8"/><rect x="596.6" y="105.4" width="2.2" height="2.2" fill="#d8d8d8"/><rect x="618" y="88.6" width="24" height="21" rx="4" fill="#1b1b1b" stroke="#8e8e8e" stroke-width="1"/><rect x="622.2" y="91.8" width="15.6" height="14.6" rx="2" fill="none" stroke="#f0f0f0" stroke-width="1.1" stroke-dasharray="2.4 1.6"/><path d="M627.4,93.2 V103.6 L630,101.4 L631.8,105.4 L633.6,104.6 L631.8,100.8 L635,100.6 Z" fill="#e8e8e8"/><path d="M673.51,91.16 L676.89,91.16 L676.89,93.62 L678.52,94.30 L680.26,92.56 L682.64,94.94 L680.90,96.68 L681.58,98.31 L684.04,98.31 L684.04,101.69 L681.58,101.69 L680.90,103.32 L682.64,105.06 L680.26,107.44 L678.52,105.70 L676.89,106.38 L676.89,108.84 L673.51,108.84 L673.51,106.38 L671.88,105.70 L670.14,107.44 L667.76,105.06 L669.50,103.32 L668.82,101.69 L666.36,101.69 L666.36,98.31 L668.82,98.31 L669.50,96.68 L667.76,94.94 L670.14,92.56 L671.88,94.30 L673.51,93.62 Z M678.4,100 a3.2,3.2 0 1 0 -6.4,0 a3.2,3.2 0 1 0 6.4,0 Z" fill="#c6c6c6" fill-rule="evenodd" stroke="#c6c6c6" stroke-width="0.8" stroke-linejoin="round"/><rect x="842.4" y="93.2" width="15.6" height="15.4" rx="3" fill="none" stroke="#cfcfcf" stroke-width="1"/><path d="M846.0,98.2 L850.1999999999999,103.8 L854.4,98.2" fill="none" stroke="#f2f2f2" stroke-width="1.5"/><rect x="842.4" y="360.6" width="15.6" height="15.4" rx="3" fill="none" stroke="#cfcfcf" stroke-width="1"/><path d="M846.0,365.6 L850.1999999999999,371.20000000000005 L854.4,365.6" fill="none" stroke="#f2f2f2" stroke-width="1.5"/><rect x="842.4" y="459.8" width="15.6" height="15.4" rx="3" fill="none" stroke="#cfcfcf" stroke-width="1"/><path d="M846.0,464.8 L850.1999999999999,470.40000000000003 L854.4,464.8" fill="none" stroke="#f2f2f2" stroke-width="1.5"/></svg>
<span class="t" style="left:377.2px;top:56.0px;font-size:9px;line-height:14px;color:#f4f4f4;font-weight:700;transform:scaleX(0.8923)">A</span>
<span class="t" style="left:608.8px;top:268.6px;font-size:9px;line-height:14px;color:#b0b0b0;font-weight:400;transform:scaleX(0.9930)">H: 0</span>
<span class="t" style="left:609.8px;top:281.7px;font-size:9px;line-height:14px;color:#b0b0b0;font-weight:400;transform:scaleX(0.9616)">S: 0</span>
<span class="t" style="left:610.6px;top:294.8px;font-size:9px;line-height:14px;color:#b0b0b0;font-weight:400;transform:scaleX(0.9723)">L: 0</span>
<span class="t" style="left:793px;top:290.1px;font-size:10px;line-height:15px;color:#b0b0b0;font-weight:400;transform:scaleX(0.9109)">#:</span>
<span class="t" style="left:805px;top:289.4px;font-size:11px;line-height:16px;color:#f4f4f4;font-weight:400;transform:scaleX(0.9695)">000000</span>
<span class="t" style="left:614px;top:313.3px;font-size:10px;line-height:15px;color:#bdbdbd;font-weight:400;transform:scaleX(0.9850)">不透明度</span>
<span class="t" style="left:793.6px;top:327.6px;font-size:12px;line-height:18px;color:#f4f4f4;font-weight:400;transform:scaleX(0.8639)">100 %</span>
<span class="t" style="left:621.5px;top:359.6px;font-size:12px;line-height:18px;color:#cfcfcf;font-weight:400;transform:scaleX(0.6528)">レイヤー</span>
<span class="t" style="left:663.8px;top:359.6px;font-size:12px;line-height:18px;color:#cfcfcf;font-weight:400;transform:scaleX(0.6860)">パスブラシ</span>
<span class="t" style="left:715.7px;top:359.6px;font-size:12px;line-height:18px;color:#cfcfcf;font-weight:400;transform:scaleX(0.6725)">クイックFX</span>
<span class="t" style="left:768.6px;top:359.6px;font-size:12px;line-height:18px;color:#ffffff;font-weight:400;transform:scaleX(0.6789)">スタイル</span>
<span class="t" style="left:625.5px;top:392.4px;font-size:11px;line-height:16px;color:#8a8a8a;font-weight:400;transform:scaleX(0.9227)">検索</span>
<span class="t" style="left:629.6px;top:418.6px;font-size:12px;line-height:18px;color:#f0f0f0;font-weight:400;transform:scaleX(0.6732)">デフォルト</span>
<span class="t" style="left:621.5px;top:458.4px;font-size:12px;line-height:18px;color:#ffffff;font-weight:400;transform:scaleX(0.9077)">変形</span>
<span class="t" style="left:653.5px;top:458.4px;font-size:12px;line-height:18px;color:#cfcfcf;font-weight:400;transform:scaleX(0.6482)">ナビゲータ</span>
<span class="t" style="left:703.3px;top:458.4px;font-size:12px;line-height:18px;color:#cfcfcf;font-weight:400;transform:scaleX(0.8786)">履歴</span>
<span class="t" style="left:666px;top:497.4px;font-size:11px;line-height:16px;color:#7c7c7c;font-weight:400;transform:scaleX(0.8360)">X:</span>
<span class="t" style="left:755.2px;top:497.4px;font-size:11px;line-height:16px;color:#7c7c7c;font-weight:400;transform:scaleX(0.8906)">W:</span>
<span class="t" style="left:666px;top:521.4px;font-size:11px;line-height:16px;color:#7c7c7c;font-weight:400;transform:scaleX(0.8880)">Y:</span>
<span class="t" style="left:757.6px;top:521.4px;font-size:11px;line-height:16px;color:#7c7c7c;font-weight:400;transform:scaleX(0.8545)">H:</span>
<span class="t" style="left:665.4px;top:550.8px;font-size:11px;line-height:16px;color:#7c7c7c;font-weight:400;transform:scaleX(0.8455)">R:</span>
<span class="t" style="left:759px;top:550.8px;font-size:11px;line-height:16px;color:#7c7c7c;font-weight:400;transform:scaleX(0.7688)">S:</span>
<span class="t" style="left:684.8px;top:496.4px;font-size:12px;line-height:18px;color:#9c9c9c;font-weight:400;transform:scaleX(0.8933)">0 mm</span>
<span class="t" style="left:684.8px;top:520.4px;font-size:12px;line-height:18px;color:#9c9c9c;font-weight:400;transform:scaleX(0.8933)">0 mm</span>
<span class="t" style="left:684.8px;top:549.8px;font-size:12px;line-height:18px;color:#9c9c9c;font-weight:400;transform:scaleX(0.8776)">0 °</span>
<span class="t" style="left:776.8px;top:496.4px;font-size:12px;line-height:18px;color:#9c9c9c;font-weight:400;transform:scaleX(0.8933)">0 mm</span>
<span class="t" style="left:776.8px;top:520.4px;font-size:12px;line-height:18px;color:#9c9c9c;font-weight:400;transform:scaleX(0.8933)">0 mm</span>
<span class="t" style="left:776.8px;top:549.8px;font-size:12px;line-height:18px;color:#9c9c9c;font-weight:400;transform:scaleX(0.8776)">0 °</span>
<span class="t" style="left:470.5px;top:90.2px;font-size:12px;line-height:18px;color:#f0f0f0;font-weight:400;transform:scaleX(1.0742)">0 pt</span>
<span class="t" style="left:478.3px;top:384.2px;font-size:9px;line-height:14px;color:#d8d8d8;font-weight:400;transform:scaleX(0.9657)">W: 32.1 mm</span>
<span class="t" style="left:479.4px;top:396.0px;font-size:9px;line-height:14px;color:#d8d8d8;font-weight:400;transform:scaleX(0.9803)">H: 30.1 mm</span>
</div></div>
</div></body></html>
